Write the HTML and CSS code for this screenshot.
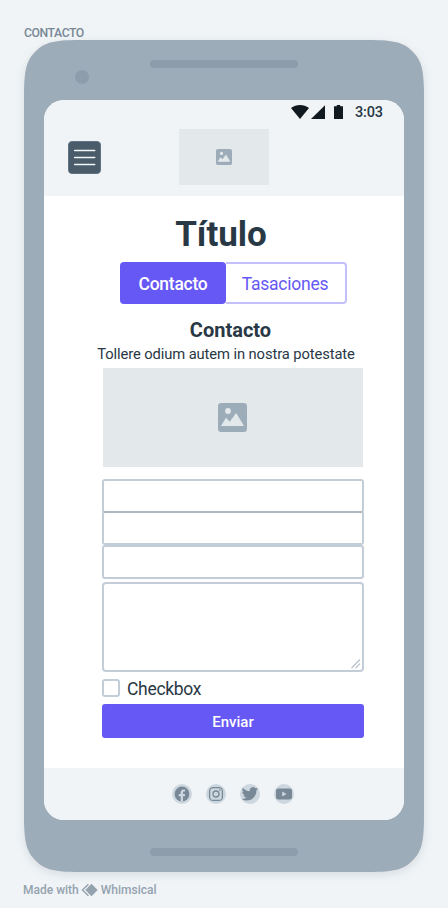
FILE: index.html
```
<!DOCTYPE html>
<html lang="es">
<head>
<meta charset="utf-8">
<title>Contacto</title>
<link rel="stylesheet" href="styles.css">
</head>
<body>
<svg class="defs" width="0" height="0" aria-hidden="true">
  <symbol id="picture" viewBox="0 0 29 29">
    <rect width="29" height="29" rx="3.2" fill="#9dacb9"/>
    <circle cx="10" cy="8" r="2.9" fill="#e3e8eb"/>
    <path d="M3 23 8 14.8l3.7 4L18.2 10 26 23z" fill="#e3e8eb"/>
  </symbol>
</svg>
<div class="label">CONTACTO</div>
<div class="phone">
  <svg class="shell" viewBox="0 0 400 832" aria-hidden="true">
    <path fill="#9dacb9" d="M0 56C0 28 3 20 11.5 11.5S28 0 56 0H344C372 0 380 3 388.5 11.5S400 28 400 56V776C400 804 397 812 388.5 820.5S372 832 344 832H56C28 832 20 829 11.5 820.5S0 804 0 776Z"/>
  </svg>
  <div class="bezel top"><span class="camera"></span><span class="slot"></span></div>
  <div class="screen">
    <header>
      <div class="status">
        <svg width="53" height="15" viewBox="0 0 53 15" fill="#111a21">
          <path d="M0 3.1C5-1 13-1 18 3.1L9 14z"/>
          <path d="M20 14 34 .3V14z"/>
          <path d="M43 1.2h2.8V0h3.4v1.2H52V14h-9z"/>
        </svg>
        <span class="time">3:03</span>
      </div>
      <div class="bar">
        <svg class="menu" width="33" height="33" viewBox="0 0 33 33">
          <rect x=".5" y=".5" width="32" height="32" rx="3.5" fill="#4a5b69" stroke="#617486"/>
          <path d="M6.7 9.5h20M6.7 16.5h20M6.7 23.5h20" stroke="#f4f7f9" stroke-width="1.6" stroke-linecap="round"/>
        </svg>
        <div class="logo"><svg width="16" height="16"><use href="#picture"/></svg></div>
      </div>
    </header>
    <main>
      <h1>Título</h1>
      <nav class="tabs"><a class="tab active">Contacto</a><a class="tab">Tasaciones</a></nav>
      <h2>Contacto</h2>
      <p>Tollere odium autem in nostra potestate</p>
      <form>
        <div class="image"><svg width="29" height="29"><use href="#picture"/></svg></div>
        <div class="field"></div>
        <div class="field joined"></div>
        <div class="field"></div>
        <div class="area">
          <svg width="10" height="10" viewBox="0 0 10 10" stroke="#b3bfca" stroke-width="1.1"><path d="M.5 9 9 .5M4.5 9.2 9 4.7"/></svg>
        </div>
        <div class="check"><span class="box"></span><span class="check-text">Checkbox</span></div>
        <div class="submit">Enviar</div>
      </form>
    </main>
    <footer>
      <svg width="20" height="20" viewBox="0 0 20 20">
        <circle cx="10" cy="10" r="10" fill="#cdd7df"/>
        <circle cx="10" cy="10" r="7.4" fill="#788896"/>
        <path fill="#cdd7df" d="M8.7 17.5v-5.3H6.8V10h1.9V8.3c0-1.9 1.1-2.9 2.8-2.9.8 0 1.6.1 1.6.1v1.9h-.9c-.9 0-1.2.5-1.2 1.1V10h2.1l-.4 2.2H11v5.3z"/>
      </svg>
      <svg width="20" height="20" viewBox="0 0 20 20" fill="none" stroke="#788896" stroke-width="1.3">
        <circle cx="10" cy="10" r="10" fill="#cdd7df" stroke="none"/>
        <rect x="3.6" y="3.6" width="12.8" height="12.8" rx="3.5"/>
        <circle cx="10" cy="10" r="3"/>
        <circle cx="13.9" cy="6.1" r=".8" fill="#788896" stroke="none"/>
      </svg>
      <svg width="20" height="20" viewBox="0 0 20 20">
        <circle cx="10" cy="10" r="10" fill="#cdd7df"/>
        <path fill="#788896" transform="translate(1.7 1.6) scale(.68)" d="M23.95 4.57a10 10 0 0 1-2.82.77 4.96 4.96 0 0 0 2.16-2.72c-.95.55-2 .96-3.13 1.18a4.92 4.92 0 0 0-8.38 4.48C7.69 8.1 4.07 6.13 1.64 3.16a4.82 4.82 0 0 0-.67 2.48c0 1.7.87 3.21 2.19 4.1a4.9 4.9 0 0 1-2.23-.62v.06a4.92 4.92 0 0 0 3.95 4.83 5 5 0 0 1-2.21.08 4.94 4.94 0 0 0 4.6 3.42A9.87 9.87 0 0 1 0 19.54a13.99 13.99 0 0 0 7.56 2.21c9.05 0 14-7.5 14-13.98 0-.21 0-.42-.02-.63a9.94 9.94 0 0 0 2.41-2.57z"/>
      </svg>
      <svg width="20" height="20" viewBox="0 0 20 20">
        <circle cx="10" cy="10" r="10" fill="#cdd7df"/>
        <rect x="2" y="4.4" width="16" height="11.2" rx="2.4" fill="#788896"/>
        <path fill="#cdd7df" d="M8.2 7.6v4.8l4.3-2.4z"/>
      </svg>
    </footer>
  </div>
  <div class="bezel bottom"><span class="slot"></span></div>
</div>
<div class="credit">
  <span>Made with</span>
  <svg width="17" height="14" viewBox="0 0 17 14">
    <path d="M7.4 1.3 1.5 7l5.9 5.7" fill="none" stroke="#94a2ae" stroke-width="1.4"/>
    <path d="M10.5.8 16.7 7l-6.2 6.2L4.3 7z" fill="#94a2ae"/>
  </svg>
  <span>Whimsical</span>
</div>
</body>
</html>
```
FILE: styles.css
```
* { box-sizing: border-box; }
body {
  margin: 0;
  width: 448px;
  height: 908px;
  overflow: hidden;
  padding: 24px 24px 0;
  background: #f0f4f7;
  color: #293845;
  font-family: Roboto, "Liberation Sans", sans-serif;
}
svg { display: block; flex: none; }
.defs { position: absolute; }
.label {
  height: 16px;
  line-height: 18px;
  font-size: 12.25px;
  font-weight: 500;
  letter-spacing: -.45px;
  color: #788896;
}
.phone {
  position: relative;
  width: 400px;
  height: 832px;
  padding: 0 20px;
}
.shell {
  position: absolute;
  inset: 0;
  width: 400px;
  height: 832px;
  filter: drop-shadow(0 3px 5px rgba(41, 56, 69, .12));
}
.bezel { position: relative; height: 60px; }
.bezel.bottom { height: 52px; padding-top: 28px; }
.bezel.top { padding-top: 20px; }
.camera {
  position: absolute;
  left: 31px;
  top: 30px;
  width: 14px;
  height: 14px;
  border-radius: 50%;
  background: #8d9dac;
}
.slot {
  display: block;
  width: 148px;
  height: 8px;
  margin: 0 auto;
  border-radius: 4px;
  background: #8d9dac;
}
.screen {
  position: relative;
  display: flex;
  flex-direction: column;
  height: 720px;
  border-radius: 20px;
  overflow: hidden;
  background: #fff;
}
header { height: 96px; background: #f0f4f7; }
.status {
  display: flex;
  justify-content: flex-end;
  height: 29px;
  padding: 5px 21px 0 0;
}
.time {
  width: 28px;
  margin-left: 11px;
  line-height: 15px;
  font-size: 14.5px;
  font-weight: 500;
  letter-spacing: -.2px;
  white-space: nowrap;
}
.bar { display: flex; padding-left: 24px; gap: 78px; }
.menu { margin-top: 12px; }
.logo, .image {
  display: flex;
  align-items: center;
  justify-content: center;
  background: #e3e8eb;
}
.logo { width: 90px; height: 56px; }
main { flex: 1; }
h1, h2, p { margin: 0; text-align: center; white-space: nowrap; }
h1 {
  padding: 18px 6px 0 0;
  height: 66px;
  font-size: 35px;
  line-height: 42px;
}
.tabs { display: flex; width: 227px; height: 42px; margin-left: 76px; }
.tab {
  width: 121px;
  height: 42px;
  padding-right: 1px;
  border: 2px solid #c5bffc;
  border-left: 0;
  border-radius: 0 4px 4px 0;
  font-size: 17.5px;
  line-height: 41px;
  letter-spacing: -.25px;
  text-align: center;
  color: #6658f5;
}
.tab.active {
  width: 106px;
  padding: 0;
  border: 0;
  border-radius: 4px;
  line-height: 45px;
  font-weight: 500;
  color: #fff;
  background: #6658f5;
}
h2 {
  height: 38px;
  padding: 14px 0 0 13px;
  font-size: 20px;
  line-height: 24px;
}
p {
  height: 26px;
  padding-left: 4px;
  font-size: 14.75px;
  line-height: 24px;
  letter-spacing: -.1px;
}
form { width: 262px; margin-left: 58px; }
.image { width: 260px; height: 99px; margin: 0 1px 12px; padding-right: 1px; }
.field { height: 34px; border: 2px solid #c3cdd8; border-radius: 3px; }
.joined { margin-top: -2px; border-top-color: #acb9c5; }
.area {
  display: flex;
  align-items: flex-end;
  justify-content: flex-end;
  height: 90px;
  margin-top: 3px;
  padding: 1px;
  border: 2px solid #c3cdd8;
  border-radius: 4px;
}
.check { display: flex; height: 32px; padding-top: 7px; gap: 7px; }
.box { width: 18px; height: 18px; border: 2px solid #c3cdd8; border-radius: 3px; }
.check-text { font-size: 17.5px; line-height: 20px; letter-spacing: -.3px; }
.submit {
  height: 34px;
  border-radius: 3px;
  background: #6658f5;
  color: #fff;
  font-size: 15px;
  font-weight: 500;
  line-height: 36px;
  text-align: center;
}
footer {
  display: flex;
  justify-content: center;
  align-items: center;
  gap: 14px;
  height: 52px;
  padding-left: 18px;
  background: #f0f4f7;
}
.credit {
  display: flex;
  align-items: center;
  gap: 2.5px;
  height: 16px;
  margin: 10px 0 0 -1px;
  font-size: 12px;
  font-weight: 500;
  color: #94a2ae;
}
```
